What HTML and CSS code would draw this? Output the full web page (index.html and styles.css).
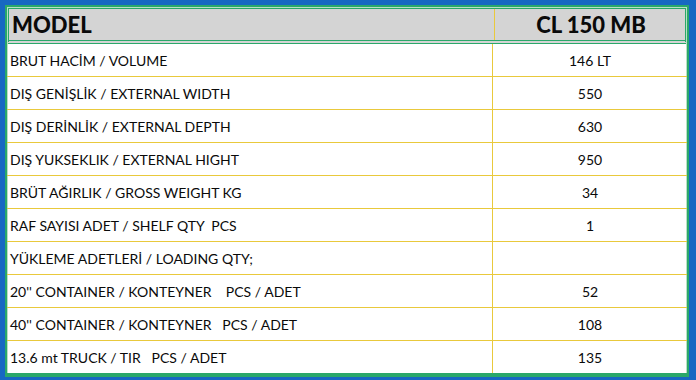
FILE: index.html
```html
<!DOCTYPE html>
<html>
<head>
<meta charset="utf-8">
<link rel="stylesheet" href="styles.css">
</head>
<body>
<div class="frame">
  <div class="sheet">
    <div class="row head">
      <div class="c1">MODEL</div>
      <div class="c2">CL 150 MB</div>
    </div>
    <div class="row"><div class="c1">BRUT HACİM / VOLUME</div><div class="c2">146 LT</div></div>
    <div class="row"><div class="c1">DIŞ GENİŞLİK / EXTERNAL WIDTH</div><div class="c2">550</div></div>
    <div class="row"><div class="c1">DIŞ DERİNLİK / EXTERNAL DEPTH</div><div class="c2">630</div></div>
    <div class="row"><div class="c1">DIŞ YUKSEKLIK / EXTERNAL HIGHT</div><div class="c2">950</div></div>
    <div class="row"><div class="c1">BRÜT AĞIRLIK / GROSS WEIGHT KG</div><div class="c2">34</div></div>
    <div class="row"><div class="c1">RAF SAYISI ADET / SHELF QTY&nbsp; PCS</div><div class="c2">1</div></div>
    <div class="row"><div class="c1">YÜKLEME ADETLERİ / LOADING QTY;</div><div class="c2"></div></div>
    <div class="row"><div class="c1">20'' CONTAINER / KONTEYNER&nbsp;&nbsp;&nbsp; PCS / ADET</div><div class="c2">52</div></div>
    <div class="row"><div class="c1">40'' CONTAINER / KONTEYNER&nbsp;&nbsp; PCS / ADET</div><div class="c2">108</div></div>
    <div class="row last"><div class="c1">13.6 mt TRUCK / TIR&nbsp;&nbsp; PCS / ADET</div><div class="c2">135</div></div>
  </div>
</div>
</body>
</html>
```
FILE: styles.css
```css
html, body {
  margin: 0;
  padding: 0;
  background: #1768c2;
}
body {
  width: 696px;
  height: 380px;
  overflow: hidden;
  font-family: "Lato", "Open Sans", sans-serif;
  color: #0a0a0a;
}
.frame {
  padding: 5px 7px 4px 5px;
}
.sheet {
  border: 2px solid #2aa86a;
  background: #fff;
  box-shadow: inset 0 0 0 1px #b8e0c4;
}
.row {
  display: grid;
  grid-template-columns: 486px 1fr;
  height: 32px;
  border-bottom: 1px solid #e9c93c;
  font-size: 14px;
}
.row .c1 {
  display: flex;
  align-items: center;
  padding-left: 3px;
  border-right: 1px solid #e9c93c;
  white-space: pre;
}
.row .c2 {
  display: flex;
  align-items: center;
  justify-content: center;
}
.row.head {
  height: 31px;
  background: #d4d4d4;
  font-size: 22px;
  font-weight: 900;
  border-bottom: 4px double #2aa86a;
  margin: 1px 1px 0 1px;
  border-top: 1px solid #2aa86a;
  border-left: 1px solid #2aa86a;
  border-right: 1px solid #2aa86a;
}
.row.head .c1 {
  padding-left: 3px;
}
.row.head .c2 {
  padding-left: 2px;
}
.row.last {
  border-bottom: 2px solid #2aa86a;
}
```
